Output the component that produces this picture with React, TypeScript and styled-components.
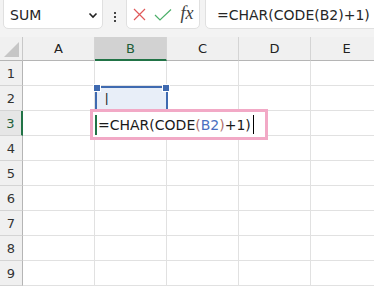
import React from "react";
import styled, { createGlobalStyle } from "styled-components";

const Global = createGlobalStyle`
	html, body {
		margin: 0;
		padding: 0;
		background: #ffffff;
		overflow: hidden;
	}
	body {
		font-family: "DejaVu Sans", "Noto Sans CJK JP", sans-serif;
	}
`;

const Page = styled.div`
	position: relative;
	width: 374px;
	height: 286px;
	overflow: hidden;
	background: #ffffff;
`;

const Toolbar = styled.div`
	height: 37px;
	background: #f3f3f3;
	display: flex;
	align-items: flex-start;
	overflow: hidden;
`;

const Box = styled.div<{ w: number; ml: number }>`
	margin-top: -5px;
	margin-left: ${(p) => p.ml}px;
	width: ${(p) => p.w}px;
	height: 34px;
	box-sizing: border-box;
	background: #ffffff;
	border: 1px solid #e0e0e0;
	border-radius: 5px;
	display: flex;
	align-items: center;
	padding-top: 5px;
	flex-shrink: 0;
`;

const NameText = styled.span`
	flex: 1;
	padding-left: 6px;
	font-size: 14px;
	color: #262626;
`;

const Dots = styled.div`
	width: 23px;
	flex-shrink: 0;
	margin-top: 5px;
	height: 24px;
	display: flex;
	flex-direction: column;
	align-items: center;
	justify-content: center;
	gap: 2px;
	& > i {
		width: 2px;
		height: 2px;
		background: #444;
	}
`;

const IconSlot = styled.div<{ w: number }>`
	width: ${(p) => p.w}px;
	display: flex;
	align-items: center;
	justify-content: center;
`;

const Fx = styled.span`
	font-family: "Liberation Serif", serif;
	font-style: italic;
	font-size: 18px;
	color: #404040;
	margin-top: -2px;
`;

const FormulaText = styled.span`
	padding-left: 11px;
	font-size: 14px;
	color: #262626;
	white-space: nowrap;
`;

const Sheet = styled.div`
	display: grid;
	grid-template-columns: 23px repeat(5, 72px);
	grid-auto-rows: 25px;
	grid-template-rows: 24px;
`;

const Corner = styled.div`
	background: #f0f0f0;
	border-right: 1px solid #c8c8c8;
	border-bottom: 1px solid #b5b5b5;
	box-sizing: border-box;
	position: relative;
	&::after {
		content: "";
		position: absolute;
		right: 3px;
		bottom: 3px;
		border-style: solid;
		border-width: 0 0 15px 15px;
		border-color: transparent transparent #c6c6c6 transparent;
	}
`;

const ColHead = styled.div<{ active?: boolean }>`
	box-sizing: border-box;
	background: ${(p) => (p.active ? "#d2d2d2" : "#f0f0f0")};
	border-right: 1px solid #d4d4d4;
	border-bottom: ${(p) => (p.active ? "2px solid #217346" : "1px solid #b5b5b5")};
	display: flex;
	align-items: center;
	justify-content: center;
	font-size: 13px;
	color: ${(p) => (p.active ? "#1e5e38" : "#222")};
`;

const RowHead = styled.div<{ active?: boolean }>`
	box-sizing: border-box;
	background: ${(p) => (p.active ? "#e6e6e6" : "#f0f0f0")};
	border-right: ${(p) => (p.active ? "2px solid #217346" : "1px solid #b5b5b5")};
	border-bottom: 1px solid #d4d4d4;
	display: flex;
	align-items: center;
	justify-content: center;
	font-size: 13px;
	color: ${(p) => (p.active ? "#1e5e38" : "#333")};
`;

const Cell = styled.div`
	box-sizing: border-box;
	border-right: 1px solid #e1e1e1;
	border-bottom: 1px solid #e1e1e1;
`;

const Selection = styled.div`
	position: absolute;
	left: 95px;
	top: 86px;
	width: 73px;
	height: 25px;
	box-sizing: border-box;
	border: 2px solid #3f6ab0;
	background: #e8eef8;
	font-family: "Liberation Sans", sans-serif;
	font-size: 13px;
	color: #222222;
	padding-left: 8px;
	line-height: 20px;
`;

const Handle = styled.i<{ side: "left" | "right" }>`
	position: absolute;
	top: -4px;
	${(p) => (p.side === "left" ? "left: -4px;" : "right: -4px;")}
	width: 6px;
	height: 6px;
	background: #3f6ab0;
	border: 1px solid #ffffff;
`;

const Editor = styled.div`
	position: absolute;
	left: 90px;
	top: 109px;
	width: 178px;
	height: 31px;
	box-sizing: border-box;
	border: 3px solid #f2a9c6;
	background: #ffffff;
	display: flex;
	align-items: center;
	padding-left: 2px;
	font-size: 14px;
	color: #1a1a1a;
	white-space: nowrap;
`;

const ActiveBar = styled.i`
	width: 2px;
	height: 20px;
	background: #217346;
	margin-right: 1px;
`;

const Ref = styled.span<{ tone: "paren" | "ref" }>`
	color: ${(p) => (p.tone === "paren" ? "#b3736f" : "#4a6fc0")};
`;

const Caret = styled.i`
	width: 1px;
	height: 19px;
	background: #000;
	margin-left: 2px;
`;

const cols = ["A", "B", "C", "D", "E"];
const rows = [1, 2, 3, 4, 5, 6, 7, 8, 9];

export default function App() {
	return (
		<Page>
			<Global />
			<Toolbar>
				<Box w={100} ml={3}>
					<NameText>SUM</NameText>
					<svg width="12" height="12" viewBox="0 0 12 12" style={{ marginRight: 3 }}>
						<path d="M2.5 4.5 L6 8 L9.5 4.5" fill="none" stroke="#222" strokeWidth="1.6" />
					</svg>
				</Box>
				<Dots>
					<i />
					<i />
					<i />
				</Dots>
				<Box w={74} ml={0}>
					<IconSlot w={24}>
						<svg width="13" height="13" viewBox="0 0 13 13">
							<path d="M1 1 L12 12 M12 1 L1 12" stroke="#e0595a" strokeWidth="1.2" fill="none" />
						</svg>
					</IconSlot>
					<IconSlot w={24}>
						<svg width="18" height="14" viewBox="0 0 18 14">
							<path d="M1 7 L6 12 L17 1.5" stroke="#4caf6a" strokeWidth="1.2" fill="none" />
						</svg>
					</IconSlot>
					<IconSlot w={24}>
						<Fx>fx</Fx>
					</IconSlot>
				</Box>
				<Box w={180} ml={5}>
					<FormulaText>=CHAR(CODE(B2)+1)</FormulaText>
				</Box>
			</Toolbar>
			<Sheet>
				<Corner />
				{cols.map((c) => (
					<ColHead key={c} active={c === "B"}>
						{c}
					</ColHead>
				))}
				{rows.map((r) => (
					<React.Fragment key={r}>
						<RowHead active={r === 3}>{r}</RowHead>
						{cols.map((c) => (
							<Cell key={c} />
						))}
					</React.Fragment>
				))}
			</Sheet>
			<Selection>
				|
				<Handle side="left" />
				<Handle side="right" />
			</Selection>
			<Editor>
				<ActiveBar />
				=CHAR(CODE<Ref tone="paren">(</Ref>
				<Ref tone="ref">B2</Ref>
				<Ref tone="paren">)</Ref>+1)
				<Caret />
			</Editor>
		</Page>
	);
}
